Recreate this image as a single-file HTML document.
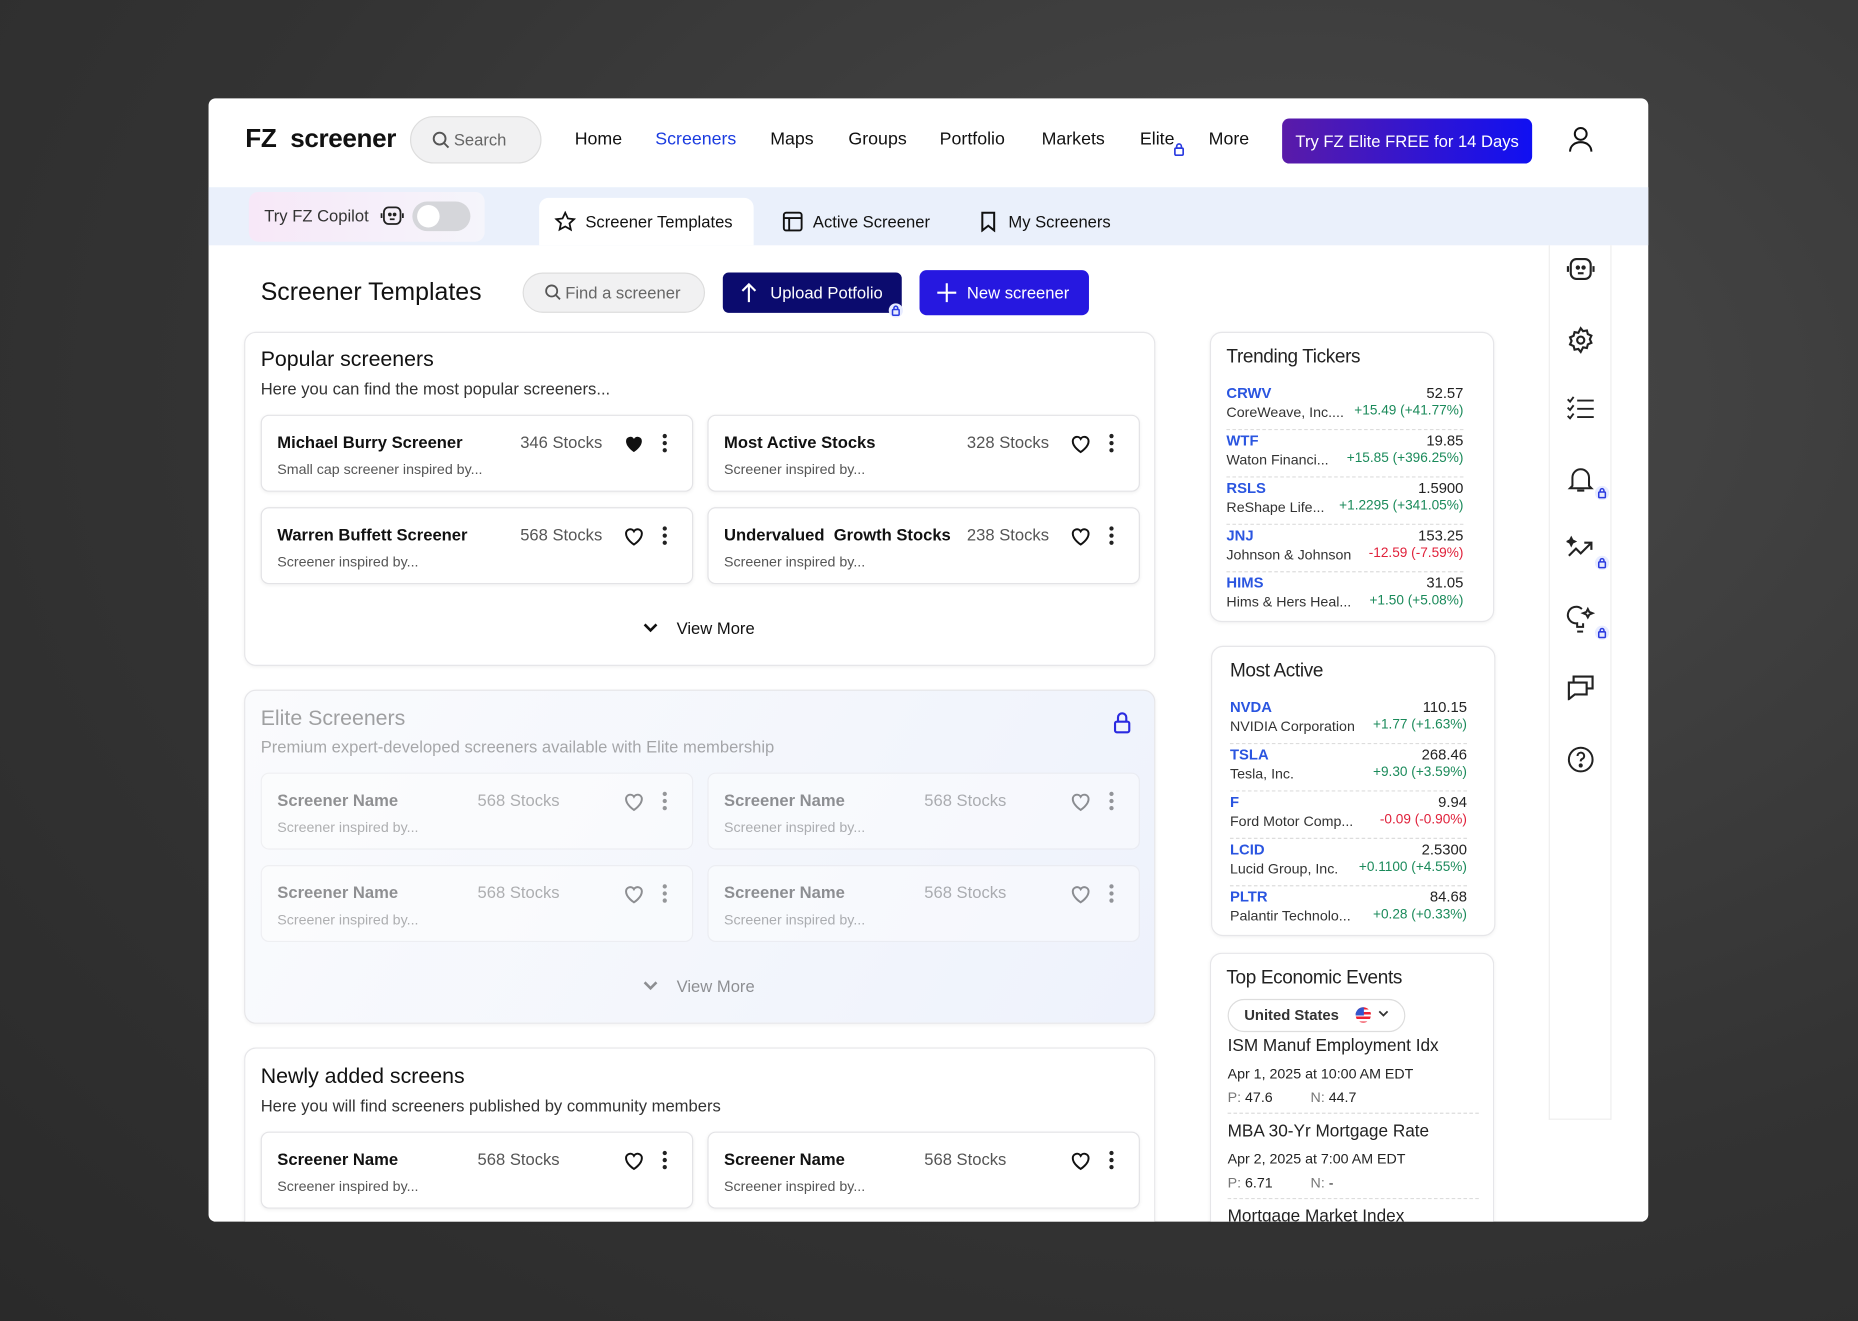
<!DOCTYPE html>
<html><head><meta charset="utf-8"><style>
*{box-sizing:border-box;margin:0;padding:0}
html,body{width:1858px;height:1321px;overflow:hidden}
body{background:radial-gradient(ellipse at 70% 30%,#4a4a4a,#333 60%,#2a2a2a);font-family:"Liberation Sans",sans-serif;color:#111}
#s{position:absolute;left:0;top:0;width:1568px;height:1115px;transform:scale(1.18495);transform-origin:0 0}
.a{position:absolute}
.card{left:176px;top:83px;width:1215px;height:948px;background:#fff;border-radius:6px;overflow:hidden}
.nav{font-size:15px;top:109px;color:#111}
.panel{border:1px solid #e6e6e9;border-radius:10px;background:#fff;box-shadow:0 1px 3px rgba(0,0,0,.05)}
.sc{width:365px;height:65px;border:1px solid #e3e3e6;border-radius:7px;background:#fff;box-shadow:0 1px 3px rgba(0,0,0,.06)}
.sc .n{position:absolute;left:13px;top:14px;font-weight:bold;font-size:14px}
.sc .c{position:absolute;left:218px;top:14px;font-size:14px;color:#555}
.sc .d{position:absolute;left:13px;top:38px;font-size:12px;color:#555}
.sc svg{position:absolute;top:13px}
.fade{opacity:.45}
.w{width:240px}
.wt{position:absolute;left:13px;top:12px;font-size:16px;color:#222;letter-spacing:-.3px}
.row{position:absolute;left:13px;width:200px;height:40px;border-bottom:1px dashed #ddd;font-size:12px}
.row .t{position:absolute;left:0;top:2px;color:#2a55e0;font-weight:bold;font-size:12.5px}
.row .p{position:absolute;right:0;top:2px;color:#222;font-size:12.5px}
.row .nm{position:absolute;left:0;top:18px;color:#333}
.row .ch{position:absolute;right:0;top:18px;color:#1a8a5a;font-size:11.5px}
.row .ch.r{color:#e0203a}
.ic{position:absolute;left:1322px}
.lock{position:absolute;width:12px;height:12px;border-radius:50%;background:#e8ecff}
</style></head><body><div id="s">
<div class="a card">
</div>
<!-- header -->
<div class="a" style="left:207px;top:104px;font-size:22px;font-weight:bold;letter-spacing:-.3px">FZ&nbsp; screener</div>
<div class="a" style="left:346px;top:98px;width:111px;height:40px;border-radius:20px;background:#f1f1f2;border:1px solid #ddd"></div>
<svg class="a" style="left:364px;top:110px" width="16" height="16" viewBox="0 0 16 16" fill="none" stroke="#555" stroke-width="1.6"><circle cx="7" cy="7" r="5"/><path d="M11 11l3.5 3.5"/></svg>
<div class="a" style="left:383px;top:110px;font-size:14px;color:#666">Search</div>
<div class="a nav" style="left:485px">Home</div>
<div class="a nav" style="left:553px;color:#1a3be0">Screeners</div>
<div class="a nav" style="left:650px">Maps</div>
<div class="a nav" style="left:716px">Groups</div>
<div class="a nav" style="left:793px">Portfolio</div>
<div class="a nav" style="left:879px">Markets</div>
<div class="a nav" style="left:962px">Elite</div>
<svg class="a" style="left:990px;top:120px" width="10" height="12" viewBox="0 0 10 12" fill="none" stroke="#2a3be0" stroke-width="1.4"><rect x="1.5" y="5" width="7" height="6" rx="1"/><path d="M3 5V3.5a2 2 0 0 1 4 0V5"/></svg>
<div class="a nav" style="left:1020px">More</div>
<div class="a" style="left:1082px;top:100px;width:211px;height:38px;border-radius:6px;background:linear-gradient(90deg,#5a1ba8,#1010f2);color:#fff;font-size:14px;line-height:38px;text-align:center">Try FZ Elite FREE for 14 Days</div>
<svg class="a" style="left:1322px;top:105px" width="24" height="24" viewBox="0 0 24 24" fill="none" stroke="#111" stroke-width="1.7"><circle cx="12" cy="8" r="5"/><path d="M3 23c0-5 4-8 9-8s9 3 9 8"/></svg>
<!-- subnav -->
<div class="a" style="left:176px;top:158px;width:1215px;height:49px;background:#eaf0fb"></div>
<div class="a" style="left:210px;top:162px;width:199px;height:42px;border-radius:8px;background:linear-gradient(90deg,#f7e8f8,#f5f5fb)"></div>
<div class="a" style="left:223px;top:174px;font-size:14px;color:#333">Try FZ Copilot</div>
<svg class="a" style="left:321px;top:173px" width="20" height="18" viewBox="0 0 20 18" fill="none" stroke="#222" stroke-width="1.5"><rect x="3" y="2" width="14" height="14" rx="4"/><path d="M1 7v4M19 7v4"/><circle cx="8" cy="8" r=".8" fill="#222"/><circle cx="12" cy="8" r=".8" fill="#222"/><path d="M8 12h4"/></svg>
<div class="a" style="left:348px;top:170px;width:49px;height:25px;border-radius:13px;background:#d5d6da"><div style="position:absolute;left:4px;top:3px;width:19px;height:19px;border-radius:50%;background:#fff"></div></div>
<div class="a" style="left:455px;top:167px;width:181px;height:40px;background:#fff;border-radius:8px 8px 0 0"></div>
<svg class="a" style="left:468px;top:178px" width="18" height="18" viewBox="0 0 24 24" fill="none" stroke="#111" stroke-width="2"><path d="M12 2l3 6.5 7 .8-5.2 4.8 1.5 7L12 17.5 5.7 21l1.5-7L2 9.3l7-.8z"/></svg>
<div class="a" style="left:494px;top:179px;font-size:14px">Screener Templates</div>
<svg class="a" style="left:660px;top:178px" width="18" height="18" viewBox="0 0 18 18" fill="none" stroke="#111" stroke-width="1.6"><rect x="1.5" y="1.5" width="15" height="15" rx="2"/><path d="M1.5 6h15M6 6v10.5"/></svg>
<div class="a" style="left:686px;top:179px;font-size:14px">Active Screener</div>
<svg class="a" style="left:827px;top:178px" width="14" height="18" viewBox="0 0 14 18" fill="none" stroke="#111" stroke-width="1.7"><path d="M2 1.5h10v15l-5-4-5 4z"/></svg>
<div class="a" style="left:851px;top:179px;font-size:14px">My Screeners</div>
<!-- right sidebar -->
<div class="a" style="left:1307px;top:207px;width:53px;height:738px;border:1px solid #eee;border-top:0"></div>
<svg class="ic" style="top:216px" width="24" height="22" viewBox="0 0 20 18" fill="none" stroke="#222" stroke-width="1.5"><rect x="3" y="2" width="14" height="14" rx="4"/><path d="M1 7v4M19 7v4"/><circle cx="8" cy="8" r=".8" fill="#222"/><circle cx="12" cy="8" r=".8" fill="#222"/><path d="M8 12h4"/></svg>
<svg class="ic" style="top:275px" width="24" height="24" viewBox="0 0 24 24" fill="none" stroke="#222" stroke-width="1.8"><circle cx="12" cy="12" r="3"/><path d="M12 2l2 2.5 3.2-.6.8 3.1 3 1.3-1.3 3 1.3 3-3 1.3-.8 3.1-3.2-.6L12 22l-2-2.5-3.2.6-.8-3.1-3-1.3 1.3-3-1.3-3 3-1.3.8-3.1 3.2.6z"/></svg>
<svg class="ic" style="top:334px" width="24" height="22" viewBox="0 0 24 22" fill="none" stroke="#222" stroke-width="1.6"><path d="M1 3l2 2 3-4M1 10l2 2 3-4M1 17l2 2 3-4M9 4h14M9 11h14M9 18h14"/></svg>
<svg class="ic" style="top:393px" width="24" height="24" viewBox="0 0 24 24" fill="none" stroke="#222" stroke-width="1.7"><path d="M5 17V10a7 7 0 0 1 14 0v7l2 2H3z"/><path d="M9 21h6"/></svg>
<svg class="ic" style="top:452px" width="24" height="22" viewBox="0 0 24 22" fill="none" stroke="#222" stroke-width="1.8"><path d="M2 17l6-6 4 4 9-9M15 6h6v6"/><path d="M4 2l1 2 2 1-2 1-1 2-1-2-2-1 2-1z" fill="#222"/></svg>
<svg class="ic" style="top:511px" width="24" height="24" viewBox="0 0 24 24" fill="none" stroke="#222" stroke-width="1.7"><path d="M13 3a7 7 0 1 0-4 12v3h5v-3"/><path d="M9 22h5"/><path d="M18 3l1.2 2.4L22 6.5l-2.8 1.2L18 10l-1.2-2.3L14 6.5l2.8-1.1z"/></svg>
<svg class="ic" style="top:569px" width="24" height="22" viewBox="0 0 24 22" fill="none" stroke="#222" stroke-width="1.8"><path d="M2 7h15v10H7l-5 4z"/><path d="M6 7V2h16v10h-5"/></svg>
<svg class="ic" style="top:629px" width="24" height="24" viewBox="0 0 24 24" fill="none" stroke="#222" stroke-width="1.7"><circle cx="12" cy="12" r="10"/><path d="M9.3 9a2.8 2.8 0 1 1 3.8 2.6c-.8.4-1.1 1-1.1 1.9"/><circle cx="12" cy="17" r=".9" fill="#222"/></svg>
<div class="lock" style="left:1346px;top:410px"></div><div class="lock" style="left:1346px;top:469px"></div><div class="lock" style="left:1346px;top:528px"></div>
<svg class="a" style="left:1348px;top:411px" width="8" height="10" viewBox="0 0 10 12" fill="none" stroke="#2a3be0" stroke-width="1.6"><rect x="1.5" y="5" width="7" height="6" rx="1"/><path d="M3 5V3.5a2 2 0 0 1 4 0V5"/></svg>
<svg class="a" style="left:1348px;top:470px" width="8" height="10" viewBox="0 0 10 12" fill="none" stroke="#2a3be0" stroke-width="1.6"><rect x="1.5" y="5" width="7" height="6" rx="1"/><path d="M3 5V3.5a2 2 0 0 1 4 0V5"/></svg>
<svg class="a" style="left:1348px;top:529px" width="8" height="10" viewBox="0 0 10 12" fill="none" stroke="#2a3be0" stroke-width="1.6"><rect x="1.5" y="5" width="7" height="6" rx="1"/><path d="M3 5V3.5a2 2 0 0 1 4 0V5"/></svg>
<!-- title row -->
<div class="a" style="left:220px;top:235px;font-size:21px;color:#111">Screener Templates</div>
<div class="a" style="left:441px;top:230px;width:154px;height:34px;border-radius:17px;background:#f1f1f2;border:1px solid #ddd"></div>
<svg class="a" style="left:459px;top:239px" width="15" height="15" viewBox="0 0 16 16" fill="none" stroke="#555" stroke-width="1.6"><circle cx="7" cy="7" r="5"/><path d="M11 11l3.5 3.5"/></svg>
<div class="a" style="left:477px;top:239px;font-size:14px;color:#666">Find a screener</div>
<div class="a" style="left:610px;top:230px;width:151px;height:34px;border-radius:5px;background:#0b0b6e;color:#fff;font-size:14px;line-height:34px;padding-left:40px">Upload Potfolio</div>
<svg class="a" style="left:625px;top:238px" width="14" height="18" viewBox="0 0 14 18" fill="none" stroke="#fff" stroke-width="1.8"><path d="M7 17V2M1.5 7.5L7 2l5.5 5.5"/></svg>
<div class="lock" style="left:750px;top:256px"></div>
<svg class="a" style="left:752px;top:257px" width="8" height="10" viewBox="0 0 10 12" fill="none" stroke="#2a3be0" stroke-width="1.6"><rect x="1.5" y="5" width="7" height="6" rx="1"/><path d="M3 5V3.5a2 2 0 0 1 4 0V5"/></svg>
<div class="a" style="left:776px;top:228px;width:143px;height:38px;border-radius:6px;background:#2618e0;color:#fff;font-size:14px;line-height:38px;padding-left:40px">New screener</div>
<svg class="a" style="left:790px;top:238px" width="18" height="18" viewBox="0 0 18 18" fill="none" stroke="#fff" stroke-width="1.8"><path d="M9 1v16M1 9h16"/></svg>

<!-- Popular -->
<div class="a panel" style="left:206px;top:280px;width:769px;height:282px"></div>
<div class="a" style="left:220px;top:293px;font-size:18px">Popular screeners</div>
<div class="a" style="left:220px;top:320px;font-size:14px;color:#333">Here you can find the most popular screeners...</div>
<div class="a sc" style="left:220px;top:350px"><div class="n">Michael Burry Screener</div><div class="c">346 Stocks</div><div class="d">Small cap screener inspired by...</div><svg style="left:304px" width="20" height="20" viewBox="0 0 24 24"><path d="M12 21s-8-5-8-11a4.3 4.3 0 0 1 8-2.3A4.3 4.3 0 0 1 20 10c0 6-8 11-8 11z" fill="#111"/></svg><svg style="left:334px" width="12" height="20" viewBox="0 0 12 20" fill="#222"><circle cx="6" cy="4" r="1.8"/><circle cx="6" cy="10" r="1.8"/><circle cx="6" cy="16" r="1.8"/></svg></div>
<div class="a sc" style="left:597px;top:350px"><div class="n">Most Active Stocks</div><div class="c">328 Stocks</div><div class="d">Screener inspired by...</div><svg style="left:304px" width="20" height="20" viewBox="0 0 24 24"><path d="M12 21s-8-5-8-11a4.3 4.3 0 0 1 8-2.3A4.3 4.3 0 0 1 20 10c0 6-8 11-8 11z" fill="none" stroke="#111" stroke-width="2"/></svg><svg style="left:334px" width="12" height="20" viewBox="0 0 12 20" fill="#222"><circle cx="6" cy="4" r="1.8"/><circle cx="6" cy="10" r="1.8"/><circle cx="6" cy="16" r="1.8"/></svg></div>
<div class="a sc" style="left:220px;top:428px"><div class="n">Warren Buffett Screener</div><div class="c">568 Stocks</div><div class="d">Screener inspired by...</div><svg style="left:304px" width="20" height="20" viewBox="0 0 24 24"><path d="M12 21s-8-5-8-11a4.3 4.3 0 0 1 8-2.3A4.3 4.3 0 0 1 20 10c0 6-8 11-8 11z" fill="none" stroke="#111" stroke-width="2"/></svg><svg style="left:334px" width="12" height="20" viewBox="0 0 12 20" fill="#222"><circle cx="6" cy="4" r="1.8"/><circle cx="6" cy="10" r="1.8"/><circle cx="6" cy="16" r="1.8"/></svg></div>
<div class="a sc" style="left:597px;top:428px"><div class="n">Undervalued&nbsp; Growth Stocks</div><div class="c">238 Stocks</div><div class="d">Screener inspired by...</div><svg style="left:304px" width="20" height="20" viewBox="0 0 24 24"><path d="M12 21s-8-5-8-11a4.3 4.3 0 0 1 8-2.3A4.3 4.3 0 0 1 20 10c0 6-8 11-8 11z" fill="none" stroke="#111" stroke-width="2"/></svg><svg style="left:334px" width="12" height="20" viewBox="0 0 12 20" fill="#222"><circle cx="6" cy="4" r="1.8"/><circle cx="6" cy="10" r="1.8"/><circle cx="6" cy="16" r="1.8"/></svg></div>
<svg class="a" style="left:542px;top:525px" width="14" height="10" viewBox="0 0 14 10" fill="none" stroke="#111" stroke-width="2.2"><path d="M2 2l5 5 5-5"/></svg>
<div class="a" style="left:571px;top:522px;font-size:14px">View More</div>

<!-- Elite -->
<div class="a panel" style="left:206px;top:582px;width:769px;height:282px;background:linear-gradient(120deg,#fafbfd,#eef2fc)"></div>
<div class="a fade" style="left:220px;top:596px;font-size:18px;color:#333">Elite Screeners</div>
<div class="a fade" style="left:220px;top:622px;font-size:14px;color:#444">Premium expert-developed screeners available with Elite membership</div>
<svg class="a" style="left:939px;top:600px" width="16" height="20" viewBox="0 0 16 20" fill="none" stroke="#2a2ae0" stroke-width="1.8"><rect x="2" y="9" width="12" height="9" rx="1.5"/><path d="M4.5 9V5.5a3.5 3.5 0 0 1 7 0V9"/></svg>
<div class="a" style="left:220px;top:652px;opacity:.45"><div class="a sc" style="left:0;top:0;box-shadow:none"><div class="n">Screener Name</div><div class="c" style="left:182px">568 Stocks</div><div class="d">Screener inspired by...</div><svg style="left:304px" width="20" height="20" viewBox="0 0 24 24"><path d="M12 21s-8-5-8-11a4.3 4.3 0 0 1 8-2.3A4.3 4.3 0 0 1 20 10c0 6-8 11-8 11z" fill="none" stroke="#111" stroke-width="2"/></svg><svg style="left:334px" width="12" height="20" viewBox="0 0 12 20" fill="#222"><circle cx="6" cy="4" r="1.8"/><circle cx="6" cy="10" r="1.8"/><circle cx="6" cy="16" r="1.8"/></svg></div>
<div class="a sc" style="left:377px;top:0;box-shadow:none"><div class="n">Screener Name</div><div class="c" style="left:182px">568 Stocks</div><div class="d">Screener inspired by...</div><svg style="left:304px" width="20" height="20" viewBox="0 0 24 24"><path d="M12 21s-8-5-8-11a4.3 4.3 0 0 1 8-2.3A4.3 4.3 0 0 1 20 10c0 6-8 11-8 11z" fill="none" stroke="#111" stroke-width="2"/></svg><svg style="left:334px" width="12" height="20" viewBox="0 0 12 20" fill="#222"><circle cx="6" cy="4" r="1.8"/><circle cx="6" cy="10" r="1.8"/><circle cx="6" cy="16" r="1.8"/></svg></div>
<div class="a sc" style="left:0;top:78px;box-shadow:none"><div class="n">Screener Name</div><div class="c" style="left:182px">568 Stocks</div><div class="d">Screener inspired by...</div><svg style="left:304px" width="20" height="20" viewBox="0 0 24 24"><path d="M12 21s-8-5-8-11a4.3 4.3 0 0 1 8-2.3A4.3 4.3 0 0 1 20 10c0 6-8 11-8 11z" fill="none" stroke="#111" stroke-width="2"/></svg><svg style="left:334px" width="12" height="20" viewBox="0 0 12 20" fill="#222"><circle cx="6" cy="4" r="1.8"/><circle cx="6" cy="10" r="1.8"/><circle cx="6" cy="16" r="1.8"/></svg></div>
<div class="a sc" style="left:377px;top:78px;box-shadow:none"><div class="n">Screener Name</div><div class="c" style="left:182px">568 Stocks</div><div class="d">Screener inspired by...</div><svg style="left:304px" width="20" height="20" viewBox="0 0 24 24"><path d="M12 21s-8-5-8-11a4.3 4.3 0 0 1 8-2.3A4.3 4.3 0 0 1 20 10c0 6-8 11-8 11z" fill="none" stroke="#111" stroke-width="2"/></svg><svg style="left:334px" width="12" height="20" viewBox="0 0 12 20" fill="#222"><circle cx="6" cy="4" r="1.8"/><circle cx="6" cy="10" r="1.8"/><circle cx="6" cy="16" r="1.8"/></svg></div>
<svg class="a" style="left:322px;top:175px" width="14" height="10" viewBox="0 0 14 10" fill="none" stroke="#111" stroke-width="2.2"><path d="M2 2l5 5 5-5"/></svg>
<div class="a" style="left:351px;top:172px;font-size:14px;white-space:nowrap">View More</div></div>

<!-- Newly -->
<div class="a panel" style="left:206px;top:884px;width:769px;height:147px;border-bottom:0;border-radius:10px 10px 0 0"></div>
<div class="a" style="left:220px;top:898px;font-size:18px">Newly added screens</div>
<div class="a" style="left:220px;top:925px;font-size:14px;color:#333">Here you will find screeners published by community members</div>
<div class="a sc" style="left:220px;top:955px"><div class="n">Screener Name</div><div class="c" style="left:182px">568 Stocks</div><div class="d">Screener inspired by...</div><svg style="left:304px" width="20" height="20" viewBox="0 0 24 24"><path d="M12 21s-8-5-8-11a4.3 4.3 0 0 1 8-2.3A4.3 4.3 0 0 1 20 10c0 6-8 11-8 11z" fill="none" stroke="#111" stroke-width="2"/></svg><svg style="left:334px" width="12" height="20" viewBox="0 0 12 20" fill="#222"><circle cx="6" cy="4" r="1.8"/><circle cx="6" cy="10" r="1.8"/><circle cx="6" cy="16" r="1.8"/></svg></div>
<div class="a sc" style="left:597px;top:955px"><div class="n">Screener Name</div><div class="c" style="left:182px">568 Stocks</div><div class="d">Screener inspired by...</div><svg style="left:304px" width="20" height="20" viewBox="0 0 24 24"><path d="M12 21s-8-5-8-11a4.3 4.3 0 0 1 8-2.3A4.3 4.3 0 0 1 20 10c0 6-8 11-8 11z" fill="none" stroke="#111" stroke-width="2"/></svg><svg style="left:334px" width="12" height="20" viewBox="0 0 12 20" fill="#222"><circle cx="6" cy="4" r="1.8"/><circle cx="6" cy="10" r="1.8"/><circle cx="6" cy="16" r="1.8"/></svg></div>

<!-- Trending -->
<div class="a panel w" style="left:1021px;top:280px;height:245px"><div class="wt">Trending Tickers</div>
<div class="row" style="top:42px"><span class="t">CRWV</span><span class="p">52.57</span><span class="nm">CoreWeave, Inc....</span><span class="ch">+15.49 (+41.77%)</span></div>
<div class="row" style="top:82px"><span class="t">WTF</span><span class="p">19.85</span><span class="nm">Waton Financi...</span><span class="ch">+15.85 (+396.25%)</span></div>
<div class="row" style="top:122px"><span class="t">RSLS</span><span class="p">1.5900</span><span class="nm">ReShape Life...</span><span class="ch">+1.2295 (+341.05%)</span></div>
<div class="row" style="top:162px"><span class="t">JNJ</span><span class="p">153.25</span><span class="nm">Johnson &amp; Johnson</span><span class="ch r">-12.59 (-7.59%)</span></div>
<div class="row" style="top:202px;border:0"><span class="t">HIMS</span><span class="p">31.05</span><span class="nm">Hims &amp; Hers Heal...</span><span class="ch">+1.50 (+5.08%)</span></div>
</div>
<!-- Most active -->
<div class="a panel w" style="left:1022px;top:545px;height:245px"><div class="wt" style="left:15px">Most Active</div>
<div class="row" style="top:42px;left:15px"><span class="t">NVDA</span><span class="p">110.15</span><span class="nm">NVIDIA Corporation</span><span class="ch">+1.77 (+1.63%)</span></div>
<div class="row" style="top:82px;left:15px"><span class="t">TSLA</span><span class="p">268.46</span><span class="nm">Tesla, Inc.</span><span class="ch">+9.30 (+3.59%)</span></div>
<div class="row" style="top:122px;left:15px"><span class="t">F</span><span class="p">9.94</span><span class="nm">Ford Motor Comp...</span><span class="ch r">-0.09 (-0.90%)</span></div>
<div class="row" style="top:162px;left:15px"><span class="t">LCID</span><span class="p">2.5300</span><span class="nm">Lucid Group, Inc.</span><span class="ch">+0.1100 (+4.55%)</span></div>
<div class="row" style="top:202px;left:15px;border:0"><span class="t">PLTR</span><span class="p">84.68</span><span class="nm">Palantir Technolo...</span><span class="ch">+0.28 (+0.33%)</span></div>
</div>
<!-- Economic -->
<div class="a panel w" style="left:1021px;top:804px;height:227px;border-bottom:0;border-radius:10px 10px 0 0;overflow:hidden"><div class="wt">Top Economic Events</div>
<div class="a" style="left:14px;top:38px;width:150px;height:28px;border:1px solid #ddd;border-radius:14px;font-size:12.5px;font-weight:bold;line-height:26px;padding-left:13px;color:#333">United States</div>
<div class="a" style="left:122px;top:45px;width:13px;height:13px;border-radius:50%;background:repeating-linear-gradient(#e23 0 2px,#fff 2px 4px);overflow:hidden"><div style="width:7px;height:7px;background:#3355cc"></div></div>
<svg class="a" style="left:141px;top:47px" width="9" height="7" viewBox="0 0 9 7" fill="none" stroke="#333" stroke-width="1.5"><path d="M1 1.5l3.5 3.5 3.5-3.5"/></svg>
<div class="a" style="left:14px;top:70px;font-size:14.5px;color:#222">ISM Manuf Employment Idx</div>
<div class="a" style="left:14px;top:94px;font-size:12px;color:#222">Apr 1, 2025 at 10:00 AM EDT</div>
<div class="a" style="left:14px;top:114px;font-size:12px;color:#222"><span style="color:#777">P:</span> 47.6</div>
<div class="a" style="left:84px;top:114px;font-size:12px;color:#222"><span style="color:#777">N:</span> 44.7</div>
<div class="a" style="left:14px;top:134px;width:212px;border-top:1px dashed #ddd"></div>
<div class="a" style="left:14px;top:142px;font-size:14.5px;color:#222">MBA 30-Yr Mortgage Rate</div>
<div class="a" style="left:14px;top:166px;font-size:12px;color:#222">Apr 2, 2025 at 7:00 AM EDT</div>
<div class="a" style="left:14px;top:186px;font-size:12px;color:#222"><span style="color:#777">P:</span> 6.71</div>
<div class="a" style="left:84px;top:186px;font-size:12px;color:#222"><span style="color:#777">N:</span> -</div>
<div class="a" style="left:14px;top:206px;width:212px;border-top:1px dashed #ddd"></div>
<div class="a" style="left:14px;top:214px;font-size:14.5px;color:#222">Mortgage Market Index</div>
</div>
</div></body></html>
